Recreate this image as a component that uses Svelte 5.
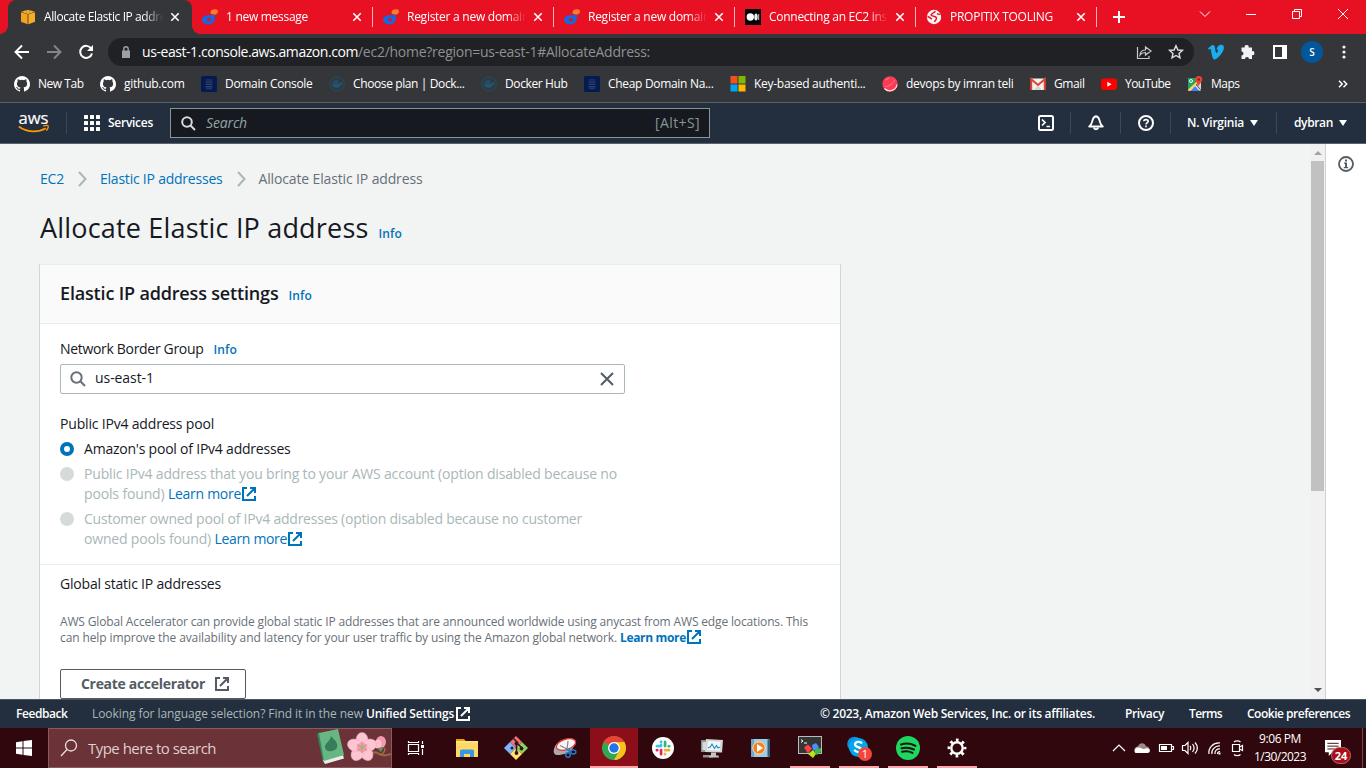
<script>
  // Tracks a label out or in so that it takes up the given width.
  function fit(node, width) {
    const range = document.createRange();
    range.selectNodeContents(node);
    const natural = range.getBoundingClientRect().width;
    node.style.letterSpacing = (width - natural) / node.textContent.length + 'px';
  }

  const tabs = [
    { icon: 'swirl', title: '1 new message', w: 82 },
    { icon: 'swirl', title: 'Register a new domain', w: 122 },
    { icon: 'swirl', title: 'Register a new domain', w: 122 },
    { icon: 'medium', title: 'Connecting an EC2 inst', w: 122 },
    { icon: 'globe', title: 'PROPITIX TOOLING', w: 103 }
  ];
  const bookmarks = [
    { icon: 'github', title: 'New Tab', w: 46 },
    { icon: 'github', title: 'github.com', w: 61 },
    { icon: 'domain', title: 'Domain Console', w: 88 },
    { icon: 'docker', title: 'Choose plan | Dock...', w: 112 },
    { icon: 'docker', title: 'Docker Hub', w: 63 },
    { icon: 'domain', title: 'Cheap Domain Na...', w: 106 },
    { icon: 'windows', title: 'Key-based authenti...', w: 112 },
    { icon: 'ball', title: 'devops by imran teli', w: 108 },
    { icon: 'gmail', title: 'Gmail', w: 31 },
    { icon: 'youtube', title: 'YouTube', w: 46 },
    { icon: 'maps', title: 'Maps', w: 29 }
  ];
  const apps = [
    { icon: 'folder' }, { icon: 'git' }, { icon: 'snip' },
    { icon: 'chrome', state: 'active' }, { icon: 'slack' }, { icon: 'monitor' },
    { icon: 'media' }, { icon: 'putty', state: 'open' }, { icon: 'skype', state: 'open' },
    { icon: 'spotify', state: 'open' }, { icon: 'gear', state: 'open' }
  ];
</script>

{#snippet closeIcon()}
  <svg class="close" width="10" height="10" viewBox="0 0 10 10"><path d="M1.3 1.3l7.4 7.4M8.7 1.3L1.3 8.7" stroke="#fff" stroke-width="1.6" /></svg>
{/snippet}

{#snippet external(color)}
  <svg class="ext" width="14" height="14" viewBox="0 0 14 14" fill="none" stroke={color} stroke-width="2"><path d="M5 1H1v12h12V9M8 1h5v5M13 1L5 9" /></svg>
{/snippet}

{#snippet small(name)}
  <svg class="small" width="16" height="16" viewBox="0 0 16 16">
    {#if name === 'swirl'}
      <path d="M13 4.8C13 9 13.4 15.5 6.6 15.5 2.8 15.500 0 13.500 0 10.800 0 8 3 6.300 6.500 6.300 9.500 6.300 11 5.800 13 4.800z" fill="#1668dc" /><ellipse cx="7" cy="10.700" rx="2" ry="1.700" fill="#e81123" /><path d="M8.500 3.600C8.500 1.200 10.500.3 12.500.3 14.500.3 16 .8 16 2.400 16 4.300 14 5.500 12 5.500 10 5.500 8.500 5 8.500 3.600z" fill="#ff7c24" />
    {:else if name === 'medium'}
      <rect width="16" height="16" fill="#000" /><circle cx="5.300" cy="8" r="3.700" fill="#fff" /><ellipse cx="11" cy="8" rx="1.700" ry="3.500" fill="#eee" /><rect x="13.200" y="5" width="1" height="6" fill="#ccc" />
    {:else if name === 'globe'}
      <circle cx="8" cy="8" r="7.200" fill="#f6f3f3" /><path d="M9.500 2.200C7.500 4.500 6 4 5 6c1 2 5 .500 5.500 3 .3 1.500-1.500 2-2 4M1.500 7.500C3.500 8 4.500 9.500 6 10M11 4.500c1 1 2 1 3.200.8" stroke="#e81123" stroke-width="1.400" fill="none" />
    {:else if name === 'cube'}
      <path d="M8 1l6.800 1.700L8 5 1.200 2.700z" fill="#fbbf3d" /><path d="M1 3.300l6.600 2v9.900L1 12.800z" fill="#f3a31c" /><path d="M15 3.300l-6.600 2v9.900l6.600-2.400z" fill="#f6ad24" /><path d="M4 1.800l7 2.100M12 1.800L5 3.900" stroke="#d98d12" stroke-width=".6" fill="none" />
    {:else if name === 'github'}
      <path fill="#fff" d="M8 0a8 8 0 0 0-2.530 15.590c.4.070.550-.170.550-.380v-1.490c-2.010.370-2.530-.490-2.690-.940-.090-.230-.480-.940-.820-1.130-.280-.150-.680-.520-.010-.530.630-.010 1.080.580 1.230.820.720 1.210 1.870.870 2.330.660.070-.520.280-.870.510-1.070-1.780-.2-3.640-.890-3.640-3.950 0-.870.310-1.590.820-2.150-.080-.2-.360-1.020.080-2.120 0 0 .670-.210 2.200.820a7.400 7.400 0 0 1 4 0c1.530-1.040 2.200-.820 2.200-.820.440 1.100.160 1.920.080 2.120.510.560.820 1.270.820 2.150 0 3.070-1.870 3.750-3.650 3.950.290.250.540.730.540 1.480v2.200c0 .210.150.460.550.380A8 8 0 0 0 8 0z" />
    {:else if name === 'domain'}
      <rect width="16" height="16" rx="1.500" fill="#041b52" /><path d="M5 3.500h6v1H5zM4.500 5.500h7v1.300h-7zM4.500 7.800h7v1.300h-7zM4.500 10.100h7v1.300h-7zM5 12.300h6v1H5z" fill="#2f4268" />
    {:else if name === 'docker'}
      <circle cx="8" cy="8" r="7.300" fill="#2f3940" stroke="#244d65" stroke-width=".9" /><path d="M2.500 7.500h8.300c.4-1 .5-1.500 1-2 .8.500 1 1.200 1 1.700.6 0 1.200.1 1.500.4-.5.900-1.200 1-2 1.100C10.500 13 4 13 2.500 7.500zM4 5.500h5v1.500H4zM6 4h3v1H6z" fill="#24536f" />
    {:else if name === 'windows'}
      <path fill="#f25022" d="M.5 0H7.500V7.500H.5z" /><path fill="#7fba00" d="M8.500 0H15.500V7.500H8.500z" /><path fill="#00a4ef" d="M.5 8.500H7.500V15.500H.5z" /><path fill="#ffb900" d="M8.500 8.500H15.500V15.500H8.500z" />
    {:else if name === 'ball'}
      <circle cx="8" cy="8" r="7.700" fill="#fb3c55" /><path d="M3 10.500C7 10.500 11 8 12.500 4M3.500 4L7 2" stroke="#ff8a99" stroke-width=".8" fill="none" /><path d="M2.500 12.500a7.300 7.300 0 0 0 12.500-4" stroke="#ffdfe2" stroke-width="1.200" fill="none" />
    {:else if name === 'gmail'}
      <path fill="#f3f0ee" d="M1 2.500h14v11.500H1z" /><path d="M4 14l4-4.500 4 4.500z" fill="#d5d3d2" /><path d="M1.200 14V3.200L8 9l6.800-5.800V14" stroke="#db4437" stroke-width="2" fill="none" />
    {:else if name === 'youtube'}
      <rect y="2.500" width="16" height="11.500" rx="3" fill="#f00" /><path d="M6.300 5.700v5l4.300-2.500z" fill="#fff" />
    {:else if name === 'maps'}
      <path fill="#1fa463" d="M1 2h12L1 14z" /><path fill="#ececec" d="M1 14.800L8 8l6 6.800z" /><path fill="#4285f4" d="M3.500 15L8 10l4.500 5z" /><path fill="#d8d8d8" d="M10 9l4-4v9z" /><path d="M1.500 14.500L12 4.500" stroke="#ffd54a" stroke-width="2" /><path d="M11.800 0a3.400 3.400 0 0 1 3.400 3.500C15.200 6 12.500 7 11.800 10.500 11 7 8.400 6 8.400 3.500A3.400 3.400 0 0 1 11.800 0z" fill="#ea4335" /><circle cx="11.800" cy="3.500" r="1.200" fill="#8b1c14" /><circle cx="4" cy="5" r="1.500" fill="none" stroke="#fff" />
    {/if}
  </svg>
{/snippet}

{#snippet appIcon(name)}
  <svg width="24" height="24" viewBox="0 0 24 24">
    {#if name === 'folder'}
      <path d="M1 3h8l2 2.500H1z" fill="#e8a200" /><rect x="1" y="5" width="22" height="16" fill="#ffd866" /><path d="M1 5h22v1.500H1z" fill="#ffe592" /><path d="M5 21v-6a1.500 1.500 0 0 1 1.500-1.500h11A1.500 1.500 0 0 1 19 15v6h-4v-3H9v3z" fill="#3897e0" />
    {:else if name === 'git'}
      <path d="M12 0l6 6-6 6-6-6z" fill="#f2707a" /><path d="M6 6l6 6-6 6-6-6z" fill="#80b3ff" /><path d="M18 6l6 6-6 6-6-6z" fill="#8bd45e" /><path d="M12 12l6 6-6 6-6-6z" fill="#ffe36e" /><path d="M9.500 2.500L14 7M14 8l4 4M12.500 8.500v8" stroke="#35171b" stroke-width="1.500" fill="none" /><circle cx="12.500" cy="7.500" r="1.900" fill="#35171b" /><circle cx="17.500" cy="12.500" r="1.900" fill="#35171b" /><circle cx="12.500" cy="17" r="1.900" fill="#35171b" /><circle cx="8" cy="12" r="1.500" fill="#35171b" />
    {:else if name === 'snip'}
      <path d="M1 13C3 6 9 3 16 2.500 21 2 23 4 22 7.500L20 12c-3 5-10 7-15 7C1.500 19 0 17 1 13z" fill="#aaa" /><ellipse cx="13" cy="8.500" rx="10" ry="5.200" transform="rotate(-18 13 8.500)" fill="#f5f5f5" stroke="#e23b3b" stroke-width="1.300" /><path d="M7 9.500L16 14M15 5l-1 9" stroke="#888" stroke-width="1.200" /><circle cx="15" cy="19" r="2.300" fill="none" stroke="#1f7ed1" stroke-width="1.400" /><ellipse cx="20.300" cy="16" rx="2.600" ry="2" fill="none" stroke="#1f7ed1" stroke-width="1.400" /><path d="M13 13l4 3-1-4" stroke="#1f7ed1" stroke-width="1.300" fill="none" />
    {:else if name === 'chrome'}
      <circle cx="12" cy="12" r="12" fill="#30a853" /><path d="M12 12L1.610 6a12 12 0 0 1 20.780 0z" fill="#ea4335" /><path d="M12 6h10.390A12 12 0 0 1 12 24l5.200-9z" fill="#fbc116" /><circle cx="12" cy="12" r="6" fill="#fff" /><circle cx="12" cy="12" r="4.700" fill="#2374e8" />
    {:else if name === 'slack'}
      <circle cx="12" cy="12" r="11" fill="#fff" /><g stroke-width="3" stroke-linecap="round"><path d="M10.200 9.700V9M6 10.200h4" stroke="#36c5f0" /><path d="M10.200 5.700v.2" stroke="#36c5f0" /><path d="M13.900 6v4M17.900 10.200h.1" stroke="#2eb67d" /><path d="M14 13.900h4M13.900 18v.1" stroke="#ecb22e" /><path d="M10.200 14v4M6 13.900h.1" stroke="#e01e5a" /></g><path d="M4 12.050h16M12.050 4v16" stroke="#fff" stroke-width="1" />
    {:else if name === 'monitor'}
      <path d="M1 4h14v12H1zM3 19h10v2.500H3z" fill="#8e9496" /><path d="M2.500 6h4v8h-4z" fill="#d8dcdc" /><path d="M6 3l17 1-1 12.500L5 16z" fill="#d3d6d5" /><path d="M8 5l12.500.7-.8 8.800L7.200 14z" fill="#f0f8fb" /><path d="M8 12l2.200-1 1.800-3 2.500 4.500 2-3 1.500 2.500 1.800-1" stroke="#2687bf" stroke-width="1.100" fill="none" /><path d="M11 16.500h5v3h2.500l.5 2H9l.5-2H11z" fill="#c1c6c5" />
    {:else if name === 'media'}
      <path d="M7 3h14v18H7z" fill="#5f9cc0" /><path d="M18 4l3-1v18l-3-1z" fill="#365e79" /><rect x="2" y="3" width="16.500" height="18" fill="#9ccce6" /><path d="M2 3h3v18H2z" fill="#6ba9ca" /><circle cx="10" cy="12" r="6.200" fill="#f58020" stroke="#ffe0bb" /><path d="M8 8v8l6-4z" fill="#fff" />
    {:else if name === 'putty'}
      <rect x=".5" y=".5" width="23" height="17" fill="#343535" stroke="#babcbc" /><path d="M3 3.500l2 1.500L3 6.500M6 7h3" stroke="#fff" fill="none" /><path d="M6 11.500l4-3 4 4-4 5z" fill="#ff3f46" /><path d="M14 9l4-2 3 4-3 4-3-1z" fill="#4f8cff" /><path d="M10 18l5-4 3 4-3 4z" fill="#b6e616" /><path d="M18 13l5-1v4l-4 3-3-3z" fill="#41b845" />
    {:else if name === 'skype'}
      <circle cx="7.500" cy="8" r="7.300" fill="#0b8fd9" /><circle cx="15" cy="15" r="7" fill="#0078c8" /><circle cx="11.500" cy="11.500" r="9.500" fill="#00a7ec" /><path d="M15 7.500C13.500 5.300 8.300 5.300 8 8.300c-.4 3.200 7 2.500 6.500 5.700-.5 3-5.800 2.600-7.200-.2" fill="none" stroke="#fff" stroke-width="2.200" /><circle cx="18" cy="18" r="7" fill="#f2463c" /><text x="18" y="22" text-anchor="middle" font-size="11" fill="#fff">1</text>
    {:else if name === 'spotify'}
      <circle cx="12" cy="12" r="12" fill="#1ed760" /><path d="M5 8.500c5-1.500 10-1 14.500 1.300M5.500 12.300c4.500-1.200 8.500-.8 12.500 1.200M6 15.800c4-.9 7-.6 10.500 1.100" stroke="#14150f" stroke-width="2" stroke-linecap="round" fill="none" />
    {:else if name === 'gear'}
      <circle cx="12" cy="12" r="5.700" fill="none" stroke="#fff" stroke-width="2.400" /><circle cx="12" cy="12" r="8" fill="none" stroke="#fff" stroke-width="2.800" stroke-dasharray="2.700 3.583" stroke-dashoffset="1.350" />
    {/if}
  </svg>
{/snippet}

<div class="screen">
  <div class="strip">
    <div class="tab active">
      {@render small('cube')}
      <span class="title"><span use:fit={122}>Allocate Elastic IP addre</span></span>
      {@render closeIcon()}
    </div>
    {#each tabs as tab}
      <div class="tab">
        {@render small(tab.icon)}
        <span class="title"><span use:fit={tab.w}>{tab.title}</span></span>
        {@render closeIcon()}
      </div>
    {/each}
    <svg class="plus" width="12" height="12" viewBox="0 0 12 12"><path d="M6 0v12M0 6h12" stroke="#fff" stroke-width="2" /></svg>
    <div class="window-buttons">
      <svg width="12" height="12" viewBox="0 0 12 12"><path d="M1 3.500l5 5 5-5" /></svg>
      <svg width="12" height="12" viewBox="0 0 12 12"><path d="M1 6.500h10" /></svg>
      <svg width="12" height="12" viewBox="0 0 12 12"><path d="M1.500 3.500h7v7h-7zM3.500 3.500v-2h7v7h-2" /></svg>
      <svg width="12" height="12" viewBox="0 0 12 12"><path d="M1 1l10 10M11 1L1 11" /></svg>
    </div>
  </div>

  <div class="toolbar">
    <svg width="16" height="16" viewBox="0 0 16 16"><path d="M15 8H2M8 1.500L1.500 8 8 14.500" fill="none" stroke="#fff" stroke-width="1.900" /></svg>
    <svg width="16" height="16" viewBox="0 0 16 16"><path d="M1 8h13M8 1.500L14.500 8 8 14.500" fill="none" stroke="#85868a" stroke-width="1.900" /></svg>
    <svg width="16" height="16" viewBox="0 0 16 16"><path d="M13.200 4.500A6 6 0 1 0 14 9.500" fill="none" stroke="#fff" stroke-width="2" /><path d="M15 1v6H9z" fill="#fff" /></svg>
    <div class="omnibox">
      <svg width="10" height="12" viewBox="0 0 10 12"><path d="M1 4.500h8V12H1z" fill="#9aa0a6" /><path d="M2.800 5V3a2.200 2.200 0 0 1 4.400 0v2" fill="none" stroke="#9aa0a6" stroke-width="1.400" /></svg>
      <span class="url"><span class="host" use:fit={216}>us-east-1.console.aws.amazon.com</span><span use:fit={292}>/ec2/home?region=us-east-1#AllocateAddress:</span></span>
      <svg width="16" height="16" viewBox="0 0 16 16" fill="none" stroke="#c8cacd" stroke-width="1.200"><path d="M1.500 3v11.500h11.500V12M4 11c.5-4 3-5 5.500-5V3L15 7l-5.500 4V8.500c-2.500 0-4 .5-5.500 2.500z" /></svg>
      <svg width="16" height="16" viewBox="0 0 16 16"><path d="M8 1.800l1.900 4.200 4.500.4-3.400 3 1 4.500L8 11.500l-4 2.400 1-4.500-3.400-3 4.500-.4z" fill="none" stroke="#dfe1e5" stroke-width="1.400" /></svg>
    </div>
    <div class="extensions">
      <svg width="16" height="16" viewBox="0 0 16 16"><path d="M0 4.500C2 2.800 3.700 1 5 1c2.500 0 2 5.500 3 7.800.7 1.200 2-1.300 2-2.300 0-1-.8-1.200-1.500-.9C9 2.500 11 .7 13.300.7c2 0 3 1.500 2.500 4C15 9 9 15.500 6.500 15.500 4 15.500 3.500 8 2.700 5.300 2.300 4.500 1.500 5.200.8 5.700z" fill="#18adf0" /></svg>
      <svg width="16" height="16" viewBox="0 0 16 16"><path d="M1.500 3.500h3.200a2 2 0 1 1 3.900 0H12v3.700a2 2 0 1 1 0 3.900V15H9a2 2 0 0 0-4 0H1.500v-3.500a2 2 0 0 0 0-4z" fill="#f1f3f4" /></svg>
      <svg width="14" height="14" viewBox="0 0 14 14"><path d="M1 1h12v12H1z" fill="none" stroke="#fff" stroke-width="2" /><path d="M9 0h5v14H9z" fill="#fff" /></svg>
      <span class="avatar">S</span>
      <svg width="4" height="14" viewBox="0 0 4 14" fill="#f1f3f4"><circle cx="2" cy="2" r="1.600" /><circle cx="2" cy="7" r="1.600" /><circle cx="2" cy="12" r="1.600" /></svg>
    </div>
  </div>

  <div class="bookmarks">
    {#each bookmarks as b}
      <div class="bookmark">{@render small(b.icon)}<span style:width="{b.w}px"><span use:fit={b.w - 0.500}>{b.title}</span></span></div>
    {/each}
    <svg class="more" width="10" height="8" viewBox="0 0 10 8"><path d="M1 .8L4.200 4 1 7.200M5.500.8L8.700 4 5.500 7.200" fill="none" stroke="#fff" stroke-width="1.500" /></svg>
  </div>

  <header>
    <svg class="aws" width="32" height="22" viewBox="0 0 32 22">
      <text x="0.500" y="11.500" font-size="17" fill="#fff" stroke="#fff" stroke-width=".2" textLength="30" lengthAdjust="spacingAndGlyphs">aws</text>
      <path d="M.8 14.500c8 6 19 6.300 27 1.700" fill="none" stroke="#f90" stroke-width="1.700" /><path d="M25 14c3-.9 4.600-.8 5-.3.400.7-.2 3-1.700 5" fill="none" stroke="#f90" stroke-width="1.300" />
    </svg>
    <i class="rule first"></i>
    <svg class="grid" width="16" height="16" viewBox="0 0 16 16" fill="#fff">
      {#each [0, 6, 12] as y}{#each [0, 6, 12] as x}<rect {x} {y} width="4" height="4" rx=".5" />{/each}{/each}
    </svg>
    <b class="services"><span use:fit={45}>Services</span></b>
    <div class="search">
      <svg width="15" height="15" viewBox="0 0 15 15"><circle cx="6" cy="6" r="4.800" fill="none" stroke="#d5dbdb" stroke-width="2" /><path d="M9.500 9.500l4.500 4.500" stroke="#d5dbdb" stroke-width="2" /></svg>
      <em use:fit={41}>Search</em>
      <span class="hint" use:fit={45}>[Alt+S]</span>
    </div>
    <div class="account">
      <svg width="16" height="16" viewBox="0 0 16 16" fill="none" stroke="#fff" stroke-width="2"><rect x="1" y="1" width="14" height="14" rx="1.500" /><path d="M4 4.500L7 7.500l-3 3M8.500 11.500H12" stroke-width="1.700" /></svg>
      <i class="rule"></i>
      <svg width="16" height="16" viewBox="0 0 16 16" fill="none" stroke="#fff" stroke-width="1.900"><path d="M1.200 11.500C4 9.500 3.800 7.500 4.600 5 5.200 2.700 6.300 1.500 8 1.200c1.700.3 2.800 1.500 3.400 3.800.8 2.500.6 4.500 3.400 6.500z" stroke-linejoin="round" /><path d="M5.700 12.500a2.400 2.400 0 0 0 4.600 0" /></svg>
      <i class="rule"></i>
      <svg width="16" height="16" viewBox="0 0 16 16" fill="none" stroke="#fff" stroke-width="2"><circle cx="8" cy="8" r="7" /><path d="M5.800 6.300C5.800 4 10.200 4 10.200 6.300 10.200 7.800 8 7.700 8 9.500M8 10.500v1.700" stroke-width="1.600" /></svg>
      <i class="rule"></i>
      <b class="menu virginia"><span use:fit={57}>N. Virginia</span></b><i class="caret"></i>
      <i class="rule wide"></i>
      <b class="menu"><span use:fit={39}>dybran</span></b><i class="caret"></i>
    </div>
  </header>

  <div class="body">
    <main>
      <nav>
        <a href="#ec2"><span use:fit={24}>EC2</span></a>
        <svg width="9" height="16" viewBox="0 0 9 16"><path d="M1 1l6.500 7L1 15" /></svg>
        <a href="#eip"><span use:fit={122.500}>Elastic IP addresses</span></a>
        <svg width="9" height="16" viewBox="0 0 9 16"><path d="M1 1l6.500 7L1 15" /></svg>
        <span use:fit={164}>Allocate Elastic IP address</span>
      </nav>
      <div class="heading"><h1><span use:fit={328.500}>Allocate Elastic IP address</span></h1><a class="info" href="#info"><span use:fit={23.500}>Info</span></a></div>

      <section class="card">
        <div class="card-head"><h2><span use:fit={218.500}>Elastic IP address settings</span></h2><a class="info" href="#info"><span use:fit={23.500}>Info</span></a></div>
        <div class="fields">
          <div class="label"><span use:fit={143.500}>Network Border Group</span><a class="info" href="#info"><span use:fit={23.500}>Info</span></a></div>
          <div class="input">
            <svg width="16" height="16" viewBox="0 0 16 16"><circle cx="6.500" cy="6.500" r="5.200" fill="none" stroke="#687078" stroke-width="2" /><path d="M10.300 10.300l4.700 4.700" stroke="#687078" stroke-width="2" /></svg>
            <span use:fit={59}>us-east-1</span>
            <svg class="clear" width="14" height="14" viewBox="0 0 14 14"><path d="M1 1l12 12M13 1L1 13" stroke="#545b64" stroke-width="2" /></svg>
          </div>
          <div class="label pool"><span use:fit={154}>Public IPv4 address pool</span></div>
          <div class="option"><i class="radio on"></i><p><span use:fit={206.500}>Amazon's pool of IPv4 addresses</span></p></div>
          <div class="option off"><i class="radio"></i><p><span use:fit={533}>Public IPv4 address that you bring to your AWS account (option disabled because no</span><br /><span use:fit={84}>pools found)&nbsp;</span><a href="#more"><span use:fit={73}>Learn more</span>{@render external('#0073bb')}</a></p></div>
          <div class="option off"><i class="radio"></i><p><span use:fit={498}>Customer owned pool of IPv4 addresses (option disabled because no customer</span><br /><span use:fit={130.500}>owned pools found)&nbsp;</span><a href="#more"><span use:fit={72.500}>Learn more</span>{@render external('#0073bb')}</a></p></div>
        </div>
        <div class="global">
          <div class="label"><span use:fit={161}>Global static IP addresses</span></div>
          <p class="note"><span use:fit={748}>AWS Global Accelerator can provide global static IP addresses that are announced worldwide using anycast from AWS edge locations. This</span><br /><span use:fit={560}>can help improve the availability and latency for your user traffic by using the Amazon global network.&nbsp;</span><a href="#more"><b use:fit={66}>Learn more</b>{@render external('#0073bb')}</a></p>
          <button><span use:fit={124}>Create accelerator</span>{@render external('#545b64')}</button>
        </div>
      </section>
    </main>
    <div class="scrollbar"><i class="up"></i><i class="thumb"></i><i class="down"></i></div>
    <aside><svg width="16" height="16" viewBox="0 0 16 16"><circle cx="8" cy="8" r="7" fill="none" stroke="#545b64" stroke-width="1.800" /><path d="M7 3.500h2v2H7zM6 6.500h3V11h1.200v1.300H5.800V11H7V7.800H6z" fill="#545b64" /></svg></aside>
  </div>

  <footer>
    <b use:fit={51.500}>Feedback</b>
    <span class="language"><span use:fit={274}>Looking for language selection? Find it in the new&nbsp;</span><b use:fit={88}>Unified Settings</b>{@render external('#fff')}</span>
    <div class="legal"><b use:fit={275}>© 2023, Amazon Web Services, Inc. or its affiliates.</b><b use:fit={39}>Privacy</b><b use:fit={33}>Terms</b><b use:fit={103}>Cookie preferences</b></div>
  </footer>

  <div class="taskbar">
    <svg class="start" width="16" height="16" viewBox="0 0 16 16" fill="#fff"><path d="M0 2.200L6.500 1.300V7.500H0zM7.500 1.100L16 0v7.500H7.500zM0 8.500h6.500v6.200L0 13.800zM7.500 8.500H16V16l-8.500-1.100z" /></svg>
    <div class="task-search">
      <svg width="18" height="18" viewBox="0 0 18 18" fill="none" stroke="#eadfe0" stroke-width="1.300"><circle cx="11" cy="6.500" r="5.500" /><path d="M7 10.500L1 17" /></svg>
      <span use:fit={128}>Type here to search</span>
      <svg class="art" width="75" height="38" viewBox="0 0 75 38">
        <path d="M1 5L4 3l7 31-2 1-2-2z" fill="#338561" /><path d="M7 31l20-5 1 3.500L9 35z" fill="#e6efe8" /><path d="M3 4l19-4 6 26-20 6z" fill="#68b783" /><path d="M15 7c2 3 5 4 6 8 1 4-1 6-5 7-4 1-7-1-7-4 0-4 5-5 6-11z" fill="#357d5b" />
        <path d="M54 24c7-2 8 1 12 2 3 .8 6 0 9-1" fill="none" stroke="#98643b" stroke-width="2.200" /><path d="M64 26c3-1 5-4 5-7" stroke="#a3764b" stroke-width="1.300" fill="none" />
        <ellipse cx="65" cy="13" rx="5" ry="6" fill="#f29bb0" /><ellipse cx="62" cy="15" rx="3.500" ry="4.500" fill="#ffc0cc" /><path d="M61 19l7-1-3 5z" fill="#5f9155" />
        <g fill="#fcc5d2" stroke="#f3a5ba" stroke-width=".5">{#each [0, 72, 144, 216, 288] as a}<ellipse cx="46" cy="11" rx="6" ry="7.500" transform="rotate({a} 46 18.500)" />{/each}</g>
        <circle cx="46" cy="18.500" r="5" fill="#f59db2" />
        <g stroke="#d17f86" stroke-width=".7">{#each [0, 60, 120, 180, 240, 300] as a}<path d="M46 18.500v-6" transform="rotate({a} 46 18.500)" />{/each}</g><circle cx="46" cy="18.500" r="2.200" fill="#9dbd6a" />
      </svg>
    </div>
    <div class="app view"><svg width="18" height="16" viewBox="0 0 18 16" fill="none" stroke="#fff" stroke-width="1.200"><path d="M1.500 4.500h10v7h-10zM1.500 1v1.500h10V1M1.500 15v-1.500h10V15M15.500 1v3M15.500 9v6" /><path d="M14 5h3v3h-3z" fill="#fff" stroke="none" /></svg></div>
    <div class="apps">{#each apps as app}<div class="app {app.state ?? ''}">{@render appIcon(app.icon)}</div>{/each}</div>
    <div class="tray">
      <svg width="16" height="16" viewBox="0 0 16 16"><path d="M3 11l6-6 6 6" /></svg>
      <svg width="16" height="16" viewBox="0 0 16 16"><path d="M1 11.500C-.5 8.500 2 6.500 4 6.500 5.500 2 11 2.500 12 6.500c3 0 4 2 3.500 5z" fill="#9b8b8d" stroke="none" /><path d="M1.500 13c-2-2-.5-5 2-5.500 3-.5 4 1 6.500 1.700 2-1.500 5-1 5.700.5.500 2-.5 3.300-2.500 3.300z" fill="#fff" stroke="none" /></svg>
      <svg width="16" height="16" viewBox="0 0 16 16"><path d="M1.500 4.500h12v7h-12zM14 6.500h1.500v3H14" /><path d="M3 6h6v4H3z" fill="#fff" stroke="none" /></svg>
      <svg width="16" height="16" viewBox="0 0 16 16"><path d="M.5 5.500H3L6 2.500v11l-3-3H.5zM8 6c1 1 1 3 0 4M10.500 4c2 2.500 2 5.500 0 8M13 2.500c3 3.500 3 7.500 0 11" /></svg>
      <svg width="16" height="16" viewBox="0 0 16 16"><path d="M3 14C2 8 7 2.500 14 3M6 14C5 10 9 5.500 14 6M9 14c-.5-3 2-5.500 5-5M11.500 14c0-1.500 1-2.500 2.500-2.500" /><path d="M12.500 12.500h2v2h-2z" fill="#fff" stroke="none" /></svg>
      <svg width="16" height="18" viewBox="0 0 16 18"><path d="M2.500 5.500h7v7h-7zM9.500 8l3-1.500v5l-3-1.500M4 3c1.500-1.500 5-1.500 6.500 0M4 15.500c1.500 1.500 5 1.500 6.500 0" /></svg>
    </div>
    <div class="clock"><span use:fit={42}>9:06 PM</span><span use:fit={52}>1/30/2023</span></div>
    <div class="notices"><svg width="16" height="17" viewBox="0 0 17 18"><path d="M0 0h17v13H8l-4 4v-4H0z" fill="#fff" /><path d="M2.500 3.500h12M2.500 6.500h12M2.500 9.500h8" stroke="#3a090e" /></svg><span class="badge">24</span></div>
  </div>
</div>

<style>
  :global(body) { margin: 0; overflow: hidden; }
  .screen { width: 1366px; height: 768px; display: flex; flex-direction: column; overflow: hidden; font-family: "Open Sans", "Noto Sans", sans-serif; font-size: 12px; color: #16191f; }
  .screen * { box-sizing: border-box; }
  svg { display: block; flex: none; overflow: visible; }
  span, b, em { white-space: nowrap; }
  b { font-weight: 600; }
  a { color: #0073bb; text-decoration: none; }
  h1, h2, p { margin: 0; font-weight: 400; }
  i { flex: none; }

  .strip { height: 34px; flex: none; background: #e81123; display: flex; padding-left: 8px; color: #fff; }
  .tab { width: 181px; height: 34px; display: flex; align-items: center; padding-left: 10px; flex: none; background: linear-gradient(#f9b3b9, #f9b3b9) right 0 top 7px / 1px 20px no-repeat; }
  .tab.active { width: 184px; padding-left: 12px; background: #35363a; border-radius: 8px 8px 0 0; position: relative; }
  .tab.active::before, .tab.active::after { content: ""; position: absolute; bottom: 0; width: 8px; height: 8px; }
  .tab.active::before { left: -8px; background: radial-gradient(circle at 0 0, transparent 7.500px, #35363a 8px); }
  .tab.active::after { right: -8px; background: radial-gradient(circle at 100% 0, transparent 7.500px, #35363a 8px); }
  .title { width: 119px; margin-left: 8px; overflow: hidden; line-height: 18px; mask-image: linear-gradient(90deg, #000 84%, transparent); }
  .close { margin-left: 7px; }
  .plus { margin: 11px 0 0 16px; }
  .window-buttons { display: flex; margin: 8px 17px 0 auto; gap: 34px; }
  .window-buttons svg { fill: none; stroke: #fff; stroke-width: 1; }

  .toolbar { height: 36px; flex: none; background: #35363a; display: flex; align-items: center; padding-left: 14px; gap: 16px; }
  .omnibox { width: 1086px; height: 28px; margin-left: -2px; border-radius: 14px; background: #202124; display: flex; align-items: center; padding: 0 10px 0 13px; gap: 16px; }
  .omnibox > svg:first-child { margin-right: -5px; }
  .url { flex: 1; font-size: 14px; color: #8e9195; line-height: 20px; }
  .host { color: #fff; }
  .extensions { display: flex; align-items: center; gap: 16px; margin-left: -2px; }
  .extensions svg:nth-child(3) { margin-left: 1px; }
  .avatar { width: 22px; height: 22px; border-radius: 50%; background: #01579b; color: #fff; font-size: 10px; font-weight: 600; line-height: 22px; text-align: center; margin: 0 3px 0 -2px; }
  .bookmarks { height: 33px; flex: none; background: #35363a; display: flex; align-items: center; gap: 16px; padding: 0 18px 5px 14px; color: #fff; border-bottom: 1px solid #5f6063; }
  .bookmark { display: flex; gap: 8px; align-items: center; line-height: 17px; }
  .more { margin-left: auto; }

  header { height: 41px; flex: none; background: #232f3e; border-bottom: 1px solid #5a626c; display: flex; align-items: center; color: #fff; padding-left: 18px; }
  .rule { width: 1px; height: 22px; background: #414750; margin: 0 17px 0 16px; }
  .services { margin-left: 8px; width: 62px; line-height: 18px; }
  .search { width: 540px; height: 30px; background: #16191f; border: 1px solid #879596; display: flex; align-items: center; padding: 0 9px 2px 10px; font-size: 14px; color: #95a5a6; }
  .search svg { margin-top: 2px; }
  .search em { margin-left: 10px; }
  .hint { margin-left: auto; color: #879596; }
  .account { display: flex; align-items: center; margin-left: auto; padding-right: 19px; }
  .account .rule.wide { margin-left: 18px; }
  .menu { line-height: 18px; }
  .virginia { margin-left: -1px; }
  .caret { margin-left: 6px; border: solid transparent; border-width: 6px 4.500px 0; border-top-color: #fff; }

  .body { height: 555px; flex: none; display: flex; background: #f2f3f3; overflow: hidden; }
  main { flex: 1; padding: 24px 0 0 40px; height: 555px; overflow: hidden; }
  nav { display: flex; align-items: center; height: 20px; font-size: 14px; color: #687078; }
  nav svg { fill: none; stroke: #aab7b8; stroke-width: 2; margin: 1px 13px 0 14px; }
  .info { font-size: 12px; font-weight: 600; }
  .heading { display: flex; align-items: baseline; gap: 10px; margin-top: 22px; height: 36px; line-height: 36px; }
  h1 { font-size: 27px; }
  .card { width: 802px; height: 500px; margin: 18px 0 0 -1px; background: #fff; border: 1px solid #d0d6d6; border-top-color: #eaeded; }
  .card-head { height: 59px; background: #fafafa; border-bottom: 1px solid #eaeded; padding-left: 20px; display: flex; align-items: baseline; gap: 10px; line-height: 56px; }
  h2 { font-size: 18px; font-weight: 600; }
  .fields { height: 241px; border-bottom: 1px solid #eaeded; padding: 15px 20px 0; font-size: 14px; }
  .label { display: flex; align-items: baseline; gap: 10px; font-size: 14px; line-height: 20px; }
  .input { width: 565px; height: 30px; margin-top: 5px; border: 1px solid #aab7b8; border-radius: 2px; display: flex; align-items: center; padding: 0 10px 0 9px; gap: 9px; line-height: 18px; }
  .input { margin-top: 4px; }
  .input span { margin-top: -2px; }
  .clear { margin-left: auto; }
  .pool { margin-top: 20px; }
  .option { display: flex; gap: 10px; margin-top: 5px; line-height: 20px; }
  .off { color: #aab7b8; }
  .radio { width: 14px; height: 14px; margin-top: 3px; border-radius: 50%; background: #d5dbdb; }
  .radio.on { background: #fff; border: 4px solid #0073bb; }
  .ext { display: inline-block; vertical-align: -2px; margin-left: 1px; }
  .global { padding: 9px 20px 0; }
  .note { margin-top: 20px; font-size: 12px; line-height: 16px; color: #687078; }
  .note b { font-weight: 700; }
  button { margin-top: 23px; width: 186px; height: 30px; border: 1px solid #545b64; border-radius: 2px; background: #fff; color: #545b64; font: 700 14px/20px "Open Sans", sans-serif; display: flex; align-items: center; padding: 0 16px 0 20px; justify-content: space-between; }
  .scrollbar { width: 15px; background: #f1f1f1; display: flex; flex-direction: column; align-items: center; }
  .up { margin: 7px 0 6px; border: solid transparent; border-width: 0 4px 4px; border-bottom-color: #a3a3a3; }
  .thumb { width: 13px; height: 330px; background: #c1c1c1; }
  .down { margin: auto 0 7px; border: solid transparent; border-width: 4px 4px 0; border-top-color: #505050; }
  aside { width: 41px; background: #fff; border-left: 1px solid #d0d1d1; padding: 12px 0 0 12px; }

  footer { height: 29px; flex: none; background: #232f3e; border-top: 1px solid #4c5661; display: flex; align-items: center; color: #fff; padding: 0 16px; line-height: 20px; }
  .language { margin-left: 24.500px; color: #aab7b8; }
  .language b { color: #fff; }
  .language .ext { vertical-align: -3px; margin-left: 2px; }
  .legal { margin-left: auto; display: flex; }
  .legal b + b { margin-left: 30px; }
  .legal b + b + b { margin-left: 25px; }

  .taskbar { height: 40px; flex: none; background: #30070c; display: flex; color: #fff; }
  .start { margin: 12px 16px 0; }
  .task-search { width: 344px; height: 40px; background: #6b3237; border: 1px solid #895a5f; display: flex; align-items: center; padding-left: 11px; color: #ded0d2; font-size: 15px; }
  .task-search > span { margin-left: 10px; }
  .art { margin-left: auto; }
  .apps { display: flex; gap: 1px; margin-left: 3px; }
  .app { width: 48px; height: 40px; display: flex; align-items: center; justify-content: center; }
  .app.active { background: #8b0e19; box-shadow: inset 0 -2px #ffa3ab; }
  .app.open { background: linear-gradient(#ffa3ab, #ffa3ab) center bottom / 40px 2px no-repeat; }
  .tray { display: flex; align-items: center; gap: 8px; margin-left: auto; }
  .tray svg { fill: none; stroke: #fff; stroke-width: 1.200; }
  .clock { width: 68px; display: flex; flex-direction: column; align-items: center; padding-top: 2px; line-height: 18px; }
  .notices { width: 49px; padding: 12px 0 0 11px; position: relative; border-right: 1px solid #74474b; margin-right: 3px; }
  .badge { position: absolute; left: 17px; top: 19px; width: 20px; height: 17px; border-radius: 9px; background: #a70f1b; border: 1px solid #bd666d; font-size: 11px; font-weight: 700; line-height: 15px; text-align: center; }
</style>
